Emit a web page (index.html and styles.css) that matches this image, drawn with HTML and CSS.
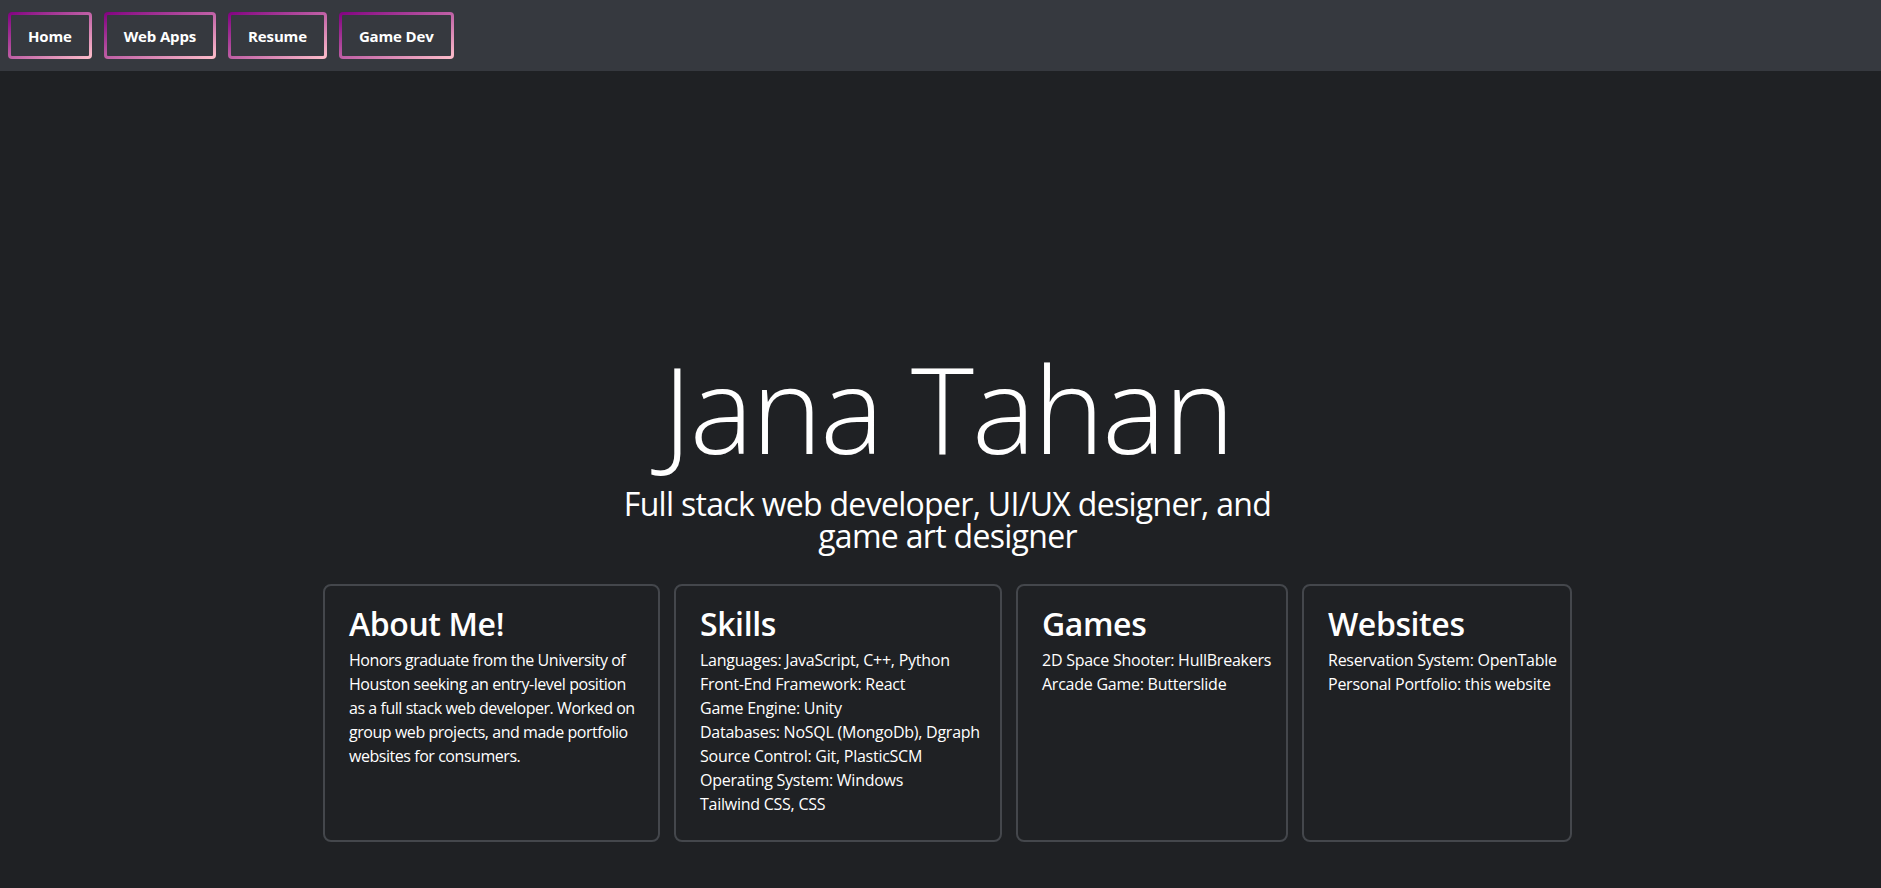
FILE: index.html
```html
<!DOCTYPE html>
<html lang="en">
<head>
<meta charset="utf-8">
<title>Jana Tahan</title>
<link rel="stylesheet" href="styles.css">
</head>
<body>
<nav class="topnav">
  <a class="nav-btn" href="#">Home</a>
  <a class="nav-btn" href="#">Web Apps</a>
  <a class="nav-btn" href="#">Resume</a>
  <a class="nav-btn" href="#">Game Dev</a>
</nav>
<main class="hero">
  <h1 class="hero-title">Jana Tahan</h1>
  <h3 class="hero-sub">Full stack web developer, UI/UX designer, and game art designer</h3>
  <section class="cards">
    <div class="card card-about">
      <h2 class="card-title">About Me!</h2>
      <p class="card-text">Honors graduate from the University of Houston seeking an entry-level position as a full stack web developer. Worked on group web projects, and made portfolio websites for consumers.</p>
    </div>
    <div class="card card-skills">
      <h2 class="card-title">Skills</h2>
      <ul class="card-list">
        <li>Languages: JavaScript, C++, Python</li>
        <li>Front-End Framework: React</li>
        <li>Game Engine: Unity</li>
        <li>Databases: NoSQL (MongoDb), Dgraph</li>
        <li>Source Control: Git, PlasticSCM</li>
        <li>Operating System: Windows</li>
        <li>Tailwind CSS, CSS</li>
      </ul>
    </div>
    <div class="card card-games">
      <h2 class="card-title">Games</h2>
      <ul class="card-list">
        <li>2D Space Shooter: HullBreakers</li>
        <li>Arcade Game: Butterslide</li>
      </ul>
    </div>
    <div class="card card-sites">
      <h2 class="card-title">Websites</h2>
      <ul class="card-list">
        <li>Reservation System: OpenTable</li>
        <li>Personal Portfolio: this website</li>
      </ul>
    </div>
  </section>
</main>
</body>
</html>
```

FILE: styles.css
```css
* { box-sizing: border-box; }

html, body {
  margin: 0;
  padding: 0;
}

body {
  background: #1f2124;
  color: #ffffff;
  font-family: "Open Sans", "Noto Sans", "Liberation Sans", sans-serif;
  min-height: 888px;
}

.topnav {
  height: 71px;
  background: #36393f;
  display: flex;
  align-items: center;
  gap: 12px;
  padding: 0 8px;
}

.nav-btn {
  height: 47px;
  display: flex;
  align-items: center;
  padding: 0 17px;
  border: 3px solid transparent;
  border-radius: 4px;
  background:
    linear-gradient(#36393f, #36393f) padding-box,
    linear-gradient(to right bottom, purple, pink) border-box;
  color: #ffffff;
  font-size: 15px;
  font-weight: 700;
  letter-spacing: -0.15px;
  text-decoration: none;
}

.hero {
  display: flex;
  flex-direction: column;
  align-items: center;
  padding: 271px 0 0 14px;
}

.hero-title {
  margin: 0;
  font-size: 120px;
  font-weight: 300;
  line-height: 132px;
  letter-spacing: -2px;
}

.hero-sub {
  margin: 14px 0 0;
  max-width: 680px;
  text-align: center;
  font-size: 32px;
  font-weight: 400;
  line-height: 32px;
  letter-spacing: -0.7px;
}

.cards {
  display: flex;
  gap: 14px;
  margin-top: 32px;
}

.card {
  border: 2px solid #44474c;
  border-radius: 8px;
  padding: 18px 16px 24px 24px;
}

.card-about { width: 337px; }
.card-skills { width: 328px; }
.card-games { width: 272px; }
.card-sites { width: 270px; }

.card-title {
  margin: 0 0 4px;
  font-size: 32px;
  font-weight: 600;
  line-height: 40px;
  letter-spacing: -0.4px;
}

.card-text,
.card-list {
  margin: 0;
  padding: 0;
  list-style: none;
  font-size: 16px;
  line-height: 24px;
  letter-spacing: -0.25px;
}

.card-text {
  letter-spacing: -0.45px;
}

.card-list li {
  white-space: nowrap;
}
```
